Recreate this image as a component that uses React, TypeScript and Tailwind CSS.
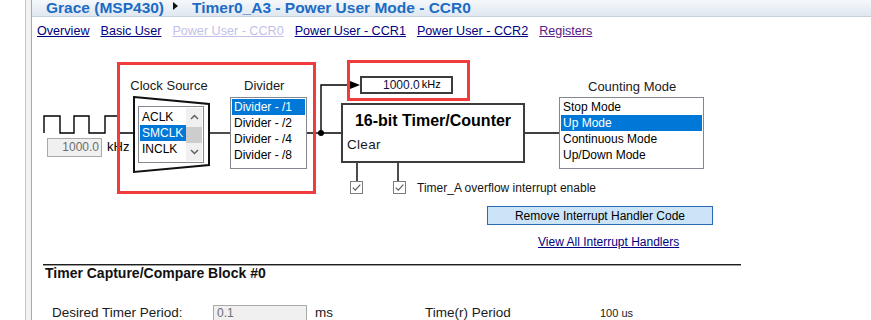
import React from "react";

const links = [
  { label: "Overview", cls: "text-[#000080]" },
  { label: "Basic User", cls: "text-[#000080]" },
  { label: "Power User - CCR0", cls: "text-[#c3bfe8]" },
  { label: "Power User - CCR1", cls: "text-[#000080]" },
  { label: "Power User - CCR2", cls: "text-[#000080]" },
  { label: "Registers", cls: "text-[#551a8b]" },
];

const ListBox = ({
  items,
  selected,
  className,
}: {
  items: string[];
  selected: number;
  className: string;
}) => (
  <div className={`absolute border border-[#828790] bg-white p-[1px] ${className}`}>
    {items.map((item, i) => (
      <div
        key={item}
        className={`h-[16px] pl-[2px] text-[12px] leading-[16px] whitespace-nowrap ${
          i === selected ? "bg-[#0078d7] text-white" : "text-black"
        }`}
      >
        {item}
      </div>
    ))}
  </div>
);

const Check = ({ className }: { className: string }) => (
  <div className={`absolute h-[13px] w-[13px] border border-[#7d7d7d] bg-white ${className}`}>
    <svg width="11" height="11" viewBox="0 0 11 11">
      <path d="M1.8 5.6 L4.3 8.2 L9.3 2.6" fill="none" stroke="#5c5c5c" strokeWidth="1.2" />
    </svg>
  </div>
);

const Chevron = ({ up }: { up?: boolean }) => (
  <svg width="9" height="6" viewBox="0 0 9 6">
    <path
      d={up ? "M1 5 L4.5 1.5 L8 5" : "M1 1 L4.5 4.5 L8 1"}
      fill="none"
      stroke="#606060"
      strokeWidth="1.5"
    />
  </svg>
);

const Diagram = () => (
  <div className="relative h-[215px] shrink-0">
    <svg className="absolute left-0 top-0" width="840" height="215">
      <g fill="none" stroke="#000" strokeWidth="1.4">
        <path d="M12 89 V72 H28 V89 H42 V72 H57 V89 H73 V72 H86 V89 H102" />
        <path d="M177 89 H198" />
        <path d="M275 89 H309" />
        <path d="M289 89 V41 H319" />
        <path d="M493 89 H527" />
        <path d="M325 119 V137" />
        <path d="M366 119 V137" />
      </g>
      <polygon points="102,53 177,60 177,121 102,128" fill="#fff" stroke="#111" strokeWidth="2" />
      <polygon points="318,37 328,41 318,45" fill="#000" />
      <circle cx="289" cy="89" r="3" fill="#000" />
    </svg>

    <div className="absolute left-[15px] top-[94px] h-[19px] w-[55px] border border-[#a9a9a9] bg-[#f0f0f0] pr-[2px] text-right text-[12px] leading-[17px] text-[#6d6d6d]">
      1000.0
    </div>
    <div className="absolute left-[75px] top-[95px] text-[13px] leading-[16px]">kHz</div>

    <div className="absolute left-[98px] top-[34px] w-[78px] text-center text-[13px] leading-[16px] text-[#1a1a1a]">
      Clock Source
    </div>
    <div className="absolute left-[106px] top-[62px] flex h-[57px] w-[66px] border border-[#828790] bg-white p-[1px]">
      <div className="flex-1 pt-[1px]">
        {["ACLK", "SMCLK", "INCLK"].map((item, i) => (
          <div
            key={item}
            className={`h-[16px] pl-[2px] text-[12px] leading-[16px] ${
              i === 1 ? "bg-[#0078d7] text-white" : "text-black"
            }`}
          >
            {item}
          </div>
        ))}
      </div>
      <div className="flex w-[16px] flex-col items-center bg-[#f0f0f0]">
        <div className="flex h-[18px] items-center justify-center">
          <Chevron up />
        </div>
        <div className="mt-[1px] h-[16px] w-full bg-[#cdcdcd]" />
        <div className="flex flex-1 items-center justify-center">
          <Chevron />
        </div>
      </div>
    </div>

    <div className="absolute left-[212px] top-[34px] text-[13px] leading-[16px] text-[#1a1a1a]">Divider</div>
    <ListBox
      items={["Divider - /1", "Divider - /2", "Divider - /4", "Divider - /8"]}
      selected={0}
      className="left-[198px] top-[53px] h-[72px] w-[77px]"
    />

    <div className="absolute left-[328px] top-[32px] flex h-[18px] w-[93px] items-center border-2 border-[#3c3c3c] bg-white pl-[21px]">
      <span className="text-[12px] leading-[14px] text-[#101040]">1000.0</span>
      <span className="ml-[2px] -mt-[3px] text-[11px] leading-[12px]">kHz</span>
    </div>

    <div className="absolute left-[309px] top-[59px] h-[60px] w-[184px] border-2 border-[#3c3c3c] bg-white">
      <div className="mt-[7px] text-center text-[16px] font-bold leading-[18px]">16-bit Timer/Counter</div>
      <div className="mt-[7px] pl-[4px] text-[13.5px] leading-[16px] tracking-[0.3px] text-[#1a1a1a]">Clear</div>
    </div>

    <div className="absolute left-[556px] top-[35px] text-[13px] leading-[16px] text-[#1a1a1a]">Counting Mode</div>
    <ListBox
      items={["Stop Mode", "Up Mode", "Continuous Mode", "Up/Down Mode"]}
      selected={1}
      className="left-[527px] top-[53px] h-[72px] w-[145px]"
    />

    <Check className="left-[318px] top-[137px]" />
    <Check className="left-[361px] top-[137px]" />
    <div className="absolute left-[385px] top-[136px] text-[12px] leading-[16px] text-[#141414]">
      Timer_A overflow interrupt enable
    </div>

    <button className="absolute left-[455px] top-[162px] h-[19px] w-[226px] border border-[#2a6ab5] bg-[#cce4f7] text-[12px] leading-[16px] text-black">
      Remove Interrupt Handler Code
    </button>
    <a className="absolute left-[506px] top-[190px] text-[12px] leading-[16px] text-[#000080] underline">
      View All Interrupt Handlers
    </a>

    <div className="pointer-events-none absolute left-[85px] top-[18px] h-[132px] w-[199px] border-[3px] border-[#f03c3c]" />
    <div className="pointer-events-none absolute left-[315px] top-[16px] h-[41px] w-[123px] border-[3px] border-[#f03c3c]" />
  </div>
);

export default function App() {
  return (
    <div className="flex h-[320px] w-[871px] overflow-hidden bg-white font-['Liberation_Sans',Arial,sans-serif] text-black">
      <div className="w-[25px] shrink-0" />
      <div className="w-[7px] shrink-0 border-x border-l-[#c4c4c4] border-r-[#a9a9a9] bg-[#f2f2f2]" />
      <div className="flex min-w-0 flex-1 flex-col">
        <header className="flex h-[17px] shrink-0 items-center border-b border-[#c6cfda] bg-linear-to-b from-[#f5f8fb] to-[#dfe7f0] pl-[14px] text-[15.5px] font-bold leading-[16px] text-[#1c6cc4]">
          <span>Grace (MSP430)</span>
          <svg className="ml-[9px] mr-[14px] -mt-[4px]" width="5" height="8" viewBox="0 0 5 8">
            <polygon points="0,0 5,4 0,8" fill="#111" />
          </svg>
          <span>Timer0_A3 - Power User Mode - CCR0</span>
        </header>

        <nav className="flex h-[27px] shrink-0 items-center gap-[11px] pl-[5px] text-[12.6px] leading-[16px]">
          {links.map((l) => (
            <a key={l.label} className={`underline ${l.cls}`}>
              {l.label}
            </a>
          ))}
        </nav>

        <Diagram />

        <section className="ml-[11px] mt-[5px] w-[698px]">
          <div className="h-[2px] border-t border-[#1e1e1e] bg-[#9c9c9c]" />
          <h2 className="pl-[2px] text-[14px] font-bold leading-[15px] text-[#111]">
            Timer Capture/Compare Block #0
          </h2>
          <div className="mt-[24px] flex items-start pl-[9px] text-[13.5px] leading-[14px] text-[#1a1a1a]">
            <div className="w-[161px] pt-[1px]">Desired Timer Period:</div>
            <div className="h-[20px] w-[94px] border border-[#a9a9a9] bg-[#f0f0f0] pl-[3px] pt-[1px] text-[12px] leading-[13px] text-[#6d6d6d]">
              0.1
            </div>
            <div className="ml-[8px] w-[110px] pt-[1px]">ms</div>
            <div className="w-[175px] pt-[1px]">Time(r) Period</div>
            <div className="pt-[1px] text-[11px] leading-[14px]">100 us</div>
          </div>
        </section>
      </div>
    </div>
  );
}
